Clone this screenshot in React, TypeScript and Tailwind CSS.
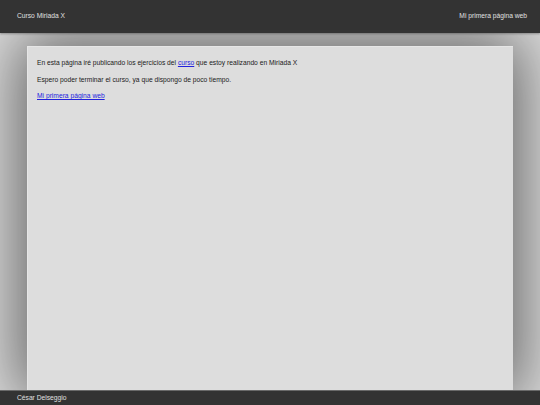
export default function App() {
  return (
    <div className="flex h-screen flex-col bg-[#dddddd] font-['Liberation_Sans',Arial,sans-serif] text-[6.7px] leading-[1.5]">
      <header className="relative z-10 flex h-[33px] shrink-0 items-center justify-between bg-[#333333] pl-[17px] pr-[13px] text-[#e0e0e0] shadow-[0_1px_2px_rgba(0,0,0,0.3)]">
        <span>Curso Miriada X</span>
        <span>Mi primera página web</span>
      </header>
      <main className="flex min-h-0 flex-1 flex-col px-[5%] pt-[13px]">
        <div className="flex-1 border-t border-l border-[#e6e6e6] bg-[#dddddd] px-[9px] pt-[11px] text-[#1a1a1a] shadow-[0_0_60px_10px_rgba(0,0,0,0.55)]">
          <p className="mb-[7px]">
            En esta página iré publicando los ejercicios del{" "}
            <a href="#" className="text-[#2222dd] underline">curso</a> que estoy realizando en Miriada X
          </p>
          <p className="mb-[6px]">Espero poder terminar el curso, ya que dispongo de poco tiempo.</p>
          <p>
            <a href="#" className="text-[#2222dd] underline">Mi primera página web</a>
          </p>
        </div>
      </main>
      <footer className="relative z-10 flex h-[15px] shrink-0 items-center border-t border-[#6a6a6a] bg-[#333333] pl-[17px] text-[#e0e0e0]">
        César Delseggio
      </footer>
    </div>
  );
}
